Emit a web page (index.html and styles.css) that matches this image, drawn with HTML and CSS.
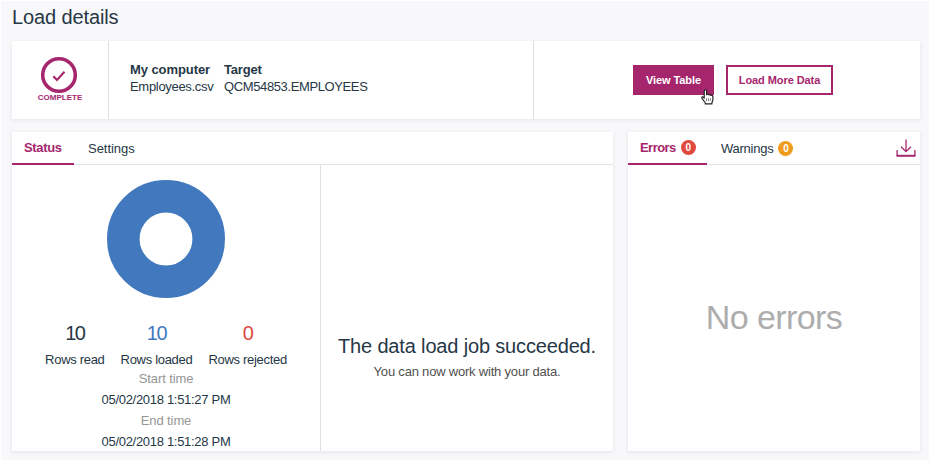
FILE: index.html
```html
<!DOCTYPE html>
<html lang="en">
<head>
<meta charset="utf-8">
<title>Load details</title>
<link rel="stylesheet" href="styles.css">
</head>
<body>
<main class="page">
  <h1 class="title">Load details</h1>
  <section class="card summary">
    <div class="state">
      <svg class="state-icon" viewBox="0 0 38 38"><circle cx="19" cy="19" r="16.3" fill="none" stroke="#a6266e" stroke-width="3.6"/><path d="M13.3 20.2l3.7 3.8 7.5-8.3" fill="none" stroke="#a6266e" stroke-width="2.1"/></svg>
      <span class="state-label">COMPLETE</span>
    </div>
    <div class="route">
      <div class="source"><b>My computer</b><span class="file">Employees.csv</span></div>
      <div class="target"><b>Target</b><span class="table-name">QCM54853.EMPLOYEES</span></div>
    </div>
    <div class="actions">
      <button class="btn primary">View Table
        <svg class="cursor" viewBox="0 0 13 16"><path d="M3.2 9.3V2.2c0-1.8 2.4-1.8 2.4 0v3.5c.3-.8 2-.7 2.2.3.5-.8 2-.5 2.1.5.7-.6 2-.2 2 1v3.3c0 1.2-1 2-1 3.2v.9H4.3V14c0-1.3-3.5-3.7-3.5-5.3 0-1.2 1.4-1.3 2.4.6z" fill="#fff" stroke="#222" stroke-width="1.2" stroke-linejoin="round"/><path d="M5.5 9.2v3M7.4 9.2v3M9.3 9.2v3" stroke="#555" stroke-width=".7"/></svg>
      </button>
      <button class="btn">Load More Data</button>
    </div>
  </section>
  <div class="columns">
    <section class="card status">
      <nav class="tabs">
        <a class="tab active tab-status">Status</a>
        <a class="tab tab-settings">Settings</a>
      </nav>
      <div class="status-body">
        <div class="progress">
          <svg class="donut" viewBox="0 0 118 118"><circle cx="59" cy="59" r="42.7" fill="none" stroke="#4178be" stroke-width="32.6"/></svg>
          <div class="counts">
            <div class="count"><span class="num">10</span><span>Rows read</span></div>
            <div class="count"><span class="num loaded">10</span><span>Rows loaded</span></div>
            <div class="count"><span class="num rejected">0</span><span>Rows rejected</span></div>
          </div>
          <dl class="times">
            <dt>Start time</dt><dd>05/02/2018 1:51:27 PM</dd>
            <dt>End time</dt><dd>05/02/2018 1:51:28 PM</dd>
          </dl>
        </div>
        <div class="result">
          <h2>The data load job succeeded.</h2>
          <p>You can now work with your data.</p>
        </div>
      </div>
    </section>
    <section class="card issues">
      <nav class="tabs">
        <a class="tab active tab-errors">Errors<span class="badge red">0</span></a>
        <a class="tab tab-warnings">Warnings<span class="badge amber">0</span></a>
        <svg class="download" viewBox="0 0 20 19"><path d="M10 0.5v12M5 7.7l5 5 5-5M1.1 11v6M18.9 11v6" fill="none" stroke="#a6266e" stroke-width="1.3"/><path d="M.6 16.8h18.8" stroke="#a6266e" stroke-width="2"/></svg>
      </nav>
      <p class="empty">No errors</p>
    </section>
  </div>
</main>
</body>
</html>
```

FILE: styles.css
```css
* { box-sizing: border-box; margin: 0; padding: 0; }
body { background: #fff; font: 13px/17px "Liberation Sans", Arial, sans-serif; color: #263746; }
.page { margin: 1px 0 0 1px; width: 928px; height: 459px; padding: 0 9px 0 11px; background: #f8f8fb; }
.title { height: 40px; padding-top: 4px; font-size: 20px; line-height: 25px; font-weight: 400; letter-spacing: -.12px; }
.card { background: #fff; box-shadow: 0 1px 4px rgba(40, 40, 60, .09); }
.summary { display: flex; height: 78px; }
.state { width: 97px; border-right: 1px solid #e0e0e2; display: flex; flex-direction: column; align-items: center; padding-top: 15px; }
.state-icon { width: 38px; height: 38px; margin-right: 3px; }
.state-label { font-size: 8px; line-height: 9px; margin-top: -1px; font-weight: 700; color: #a6266e; }
.route { width: 425px; border-right: 1px solid #e0e0e2; display: flex; gap: 10px; padding: 20px 0 0 21px; }
.source, .target { display: flex; flex-direction: column; white-space: nowrap; }
.source { width: 84px; }
.source b { letter-spacing: -.08px; }
.target b { letter-spacing: -.2px; }
.file { letter-spacing: -.31px; }
.table-name { letter-spacing: -.38px; }
.actions { display: flex; gap: 12px; padding: 24px 0 0 99px; }
.btn { position: relative; width: 107px; height: 30px; background: #fff; border: 2px solid #a6266e; color: #a6266e; font: bold 11px/14px "Liberation Sans", Arial, sans-serif; letter-spacing: -.08px; white-space: nowrap; }
.btn.primary { width: 81px; background: #a6266e; color: #fff; }
.cursor { position: absolute; left: 66px; top: 22px; width: 13px; height: 16px; }
.columns { display: flex; gap: 15px; margin-top: 13px; height: 319px; }
.status { width: 601px; display: flex; flex-direction: column; }
.issues { width: 292px; }
.tabs { display: flex; height: 33px; border-bottom: 1px solid #e3e3e5; }
.tab { height: 33px; display: flex; align-items: center; padding-left: 12px; }
.tab.active { color: #a6266e; font-weight: 700; border-bottom: 2px solid #a6266e; }
.tab-status { width: 62px; letter-spacing: -.35px; }
.tab-settings { padding-left: 14px; letter-spacing: -.03px; }
.tab-errors { width: 79px; letter-spacing: -.55px; }
.tab-warnings { padding-left: 14px; letter-spacing: -.25px; }
.badge { width: 15px; height: 15px; border-radius: 50%; margin-left: 5px; color: #fff; font-size: 10px; line-height: 15px; font-weight: 700; text-align: center; letter-spacing: 0; }
.red { background: #e0493e; }
.amber { background: #ef9b1d; }
.download { width: 20px; height: 19px; margin: 7px 4px 0 auto; }
.status-body { display: flex; height: 286px; }
.progress { width: 309px; border-right: 1px solid #e0e0e2; display: flex; flex-direction: column; align-items: center; padding-top: 15px; letter-spacing: -.3px; }
.donut { width: 118px; height: 118px; flex-shrink: 0; }
.counts { display: flex; gap: 16px; margin-top: 24px; }
.count { display: flex; flex-direction: column; align-items: center; }
.num { font-size: 20px; line-height: 22px; margin-bottom: 7px; letter-spacing: -1.5px; }
.loaded { color: #4178be; }
.rejected { color: #e0493e; }
.times { text-align: center; line-height: 21px; }
.times dt { color: #969696; letter-spacing: -.1px; line-height: 21px; }
.result { flex: 1; text-align: center; padding-top: 168px; }
.result h2 { font-size: 20px; line-height: 26px; font-weight: 400; letter-spacing: -.16px; }
.result p { color: #505050; letter-spacing: -.2px; margin-top: 4px; }
.empty { margin-top: 132px; text-align: center; font-size: 34px; line-height: 40px; color: #adadad; letter-spacing: -.6px; }
```
